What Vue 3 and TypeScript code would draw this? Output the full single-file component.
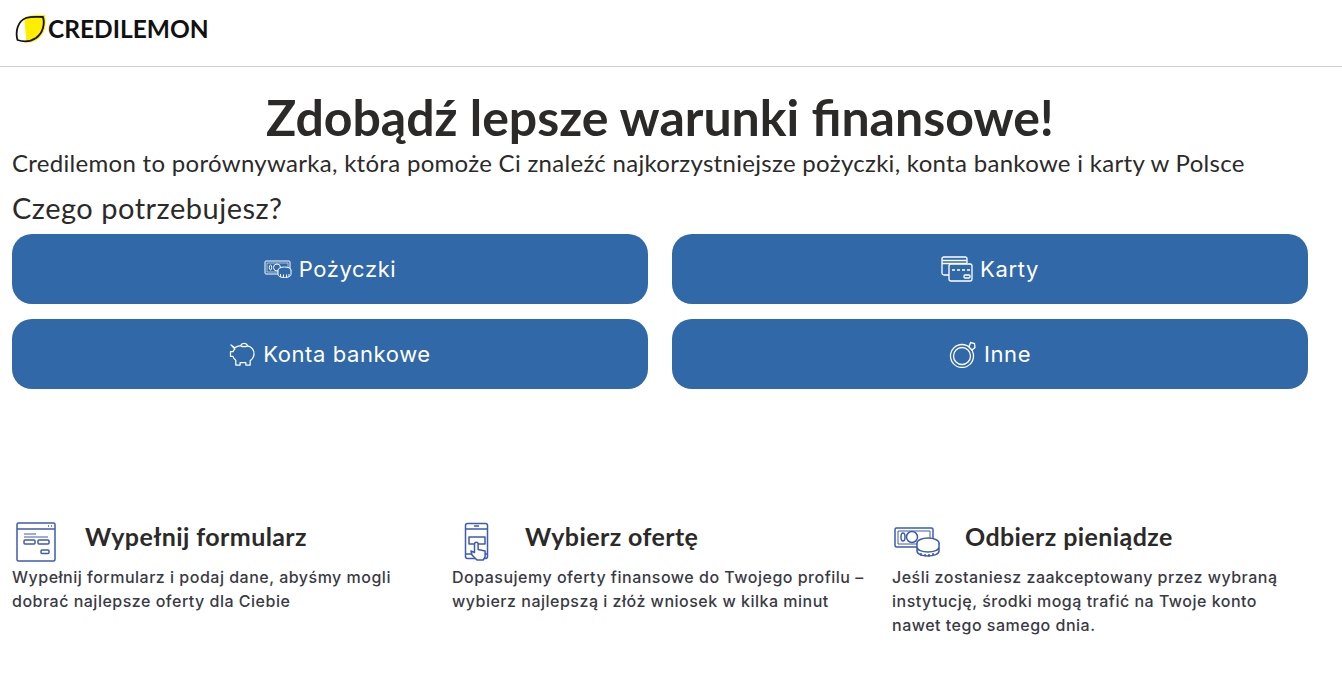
<template>
  <div class="page">
    <header class="topbar">
      <a class="logo">
        <svg width="33" height="28" viewBox="0 0 33 28">
          <path d="M10 2C15 0 25-.5 30 0c2 9 0 19-7 24-4 3-9 4-13 3.500 3-7-2-18 0-25.500z" fill="#ffee00" />
          <path d="M2.500 25C0 16 3 6 11 3c6-2 13-1 17-1 2 7 0 16-7 21-6 4-13 4-18.500 2z" fill="none" stroke="#111" stroke-width="1.800" stroke-linejoin="round" />
        </svg>
        <span>CREDILEMON</span>
      </a>
    </header>

    <main class="content">
      <h1>Zdobądź lepsze warunki finansowe!</h1>
      <p class="lead">Credilemon to porównywarka, która pomoże Ci znaleźć najkorzystniejsze pożyczki, konta bankowe i karty w Polsce</p>
      <h2>Czego potrzebujesz?</h2>

      <div class="choices">
        <button class="choice">
          <svg width="28" height="18" viewBox="0 0 28 18" fill="none" stroke="#fff" stroke-width="1">
            <rect x="1" y="1" width="25" height="13" rx="1" />
            <rect x="3" y="3" width="21" height="9" stroke-width="0.6" />
            <circle cx="13" cy="7.500" r="3.500" />
            <ellipse cx="6.500" cy="7.500" rx="1.200" ry="2.500" />
            <ellipse cx="20.500" cy="10" rx="6.500" ry="3" fill="#3068a8" />
            <path d="M14 10v4.500c0 1.800 3 3 6.500 3s6.500-1.200 6.500-3V10M16.500 14v3M19.500 14.500v3M22.500 14.500v3M25 14v2.500" fill="#3068a8" />
          </svg>
          Pożyczki
        </button>
        <button class="choice">
          <svg width="32" height="26" viewBox="0 0 32 26" fill="none" stroke="#fff" stroke-width="1.300">
            <path d="M8 19H3a2 2 0 0 1-2-2V3a2 2 0 0 1 2-2h21a2 2 0 0 1 2 2v4" />
            <path d="M1 4.500h25M1 7.500h25" />
            <rect x="8" y="8" width="23" height="17" rx="2" fill="#3068a8" />
            <path d="M11 14h3M16 14h3M21 14h3M26 14h3" />
            <rect x="23" y="19" width="6" height="3" rx="1" />
          </svg>
          Karty
        </button>
        <button class="choice">
          <svg width="27" height="24" viewBox="0 0 28 25" fill="none" stroke="#fff" stroke-width="1.300" stroke-linejoin="round">
            <path d="M2 3l4 3c2-1.500 4-2 6-2.200C13 1 18 .5 19.500 4c4 1 7 4.500 6.500 9-.3 3-2 5-4 6.500V24h-4.500v-2.500h-6V24H7v-5c-1.500-1-2.500-2.500-3-4H1.500V10H4c.5-1 1-2 2-2.500L2 3z" />
            <path d="M12 4c2 1 5 1 7.500 0" />
          </svg>
          Konta bankowe
        </button>
        <button class="choice">
          <svg width="28" height="28" viewBox="0 0 28 28" fill="none" stroke="#fff" stroke-width="1.300">
            <circle cx="13" cy="16" r="11.500" />
            <circle cx="13" cy="16" r="8.500" />
            <path d="M20 7l1.500-4.500 4 1 .5 4-3 2.500z" fill="#3068a8" />
          </svg>
          Inne
        </button>
      </div>

      <section class="steps">
        <div class="step">
          <div class="step-head">
            <svg width="48" height="40" viewBox="0 0 48 40" fill="none" stroke="#3f5bb0" stroke-width="1.500">
              <rect x="5" y="1" width="38" height="38" rx="1.500" />
              <path d="M5 7h38M36 4h1M39 4h1" />
              <path d="M12 12h12M12 15h24" stroke-width="1" />
              <rect x="12" y="18" width="11" height="4" rx="1" />
              <rect x="26" y="18" width="11" height="4" rx="1" />
              <rect x="29" y="28" width="8" height="3.500" rx="1" />
            </svg>
            <h3>Wypełnij formularz</h3>
          </div>
          <p>Wypełnij formularz i podaj dane, abyśmy mogli dobrać najlepsze oferty dla Ciebie</p>
        </div>
        <div class="step">
          <div class="step-head">
            <svg width="48" height="40" viewBox="0 0 48 40" fill="none" stroke="#3f5bb0" stroke-width="1.500" stroke-linejoin="round">
              <rect x="13.500" y="1.500" width="22" height="35" rx="2" />
              <path d="M13.500 7h22M13.500 32h8M30 32h5.500M22 4h5" />
              <rect x="17" y="15" width="16" height="7" />
              <path d="M25 38l-5-5-1-4 3.500 1.500V22a1.800 1.800 0 0 1 3.600 0v5.500l7 1.500v6l-2 3z" fill="#fff" />
            </svg>
            <h3>Wybierz ofertę</h3>
          </div>
          <p>Dopasujemy oferty finansowe do Twojego profilu – wybierz najlepszą i złóż wniosek w kilka minut</p>
        </div>
        <div class="step">
          <div class="step-head">
            <svg width="48" height="40" viewBox="0 0 48 40" fill="none" stroke="#3f5bb0" stroke-width="1.500">
              <rect x="3" y="6" width="38" height="19" rx="1.500" />
              <path d="M6 9h32v13H6z" stroke-width="1" />
              <circle cx="20" cy="15" r="5.500" />
              <ellipse cx="11" cy="15" rx="2" ry="4" />
              <ellipse cx="36" cy="21" rx="11" ry="5" fill="#fff" />
              <path d="M25 21v8c0 3 5 5 11 5s11-2 11-5v-8M25 25c0 3 5 5 11 5s11-2 11-5M29 31v3M33 32v3M37 32v3M41 31v3" fill="#fff" />
            </svg>
            <h3>Odbierz pieniądze</h3>
          </div>
          <p>Jeśli zostaniesz zaakceptowany przez wybraną instytucję, środki mogą trafić na Twoje konto nawet tego samego dnia.</p>
        </div>
      </section>
    </main>
  </div>
</template>

<script setup lang="ts">
</script>

<style>
html,
body {
  background: #fff;
}
</style>

<style scoped>
.page {
  width: 1342px;
  height: 684px;
  overflow: hidden;
  color: #2b2a29;
  font-family: "Lato", "Liberation Sans", sans-serif;
}

.topbar {
  height: 67px;
  box-sizing: border-box;
  border-bottom: 1px solid #cfcfcf;
  display: flex;
  align-items: flex-start;
  padding: 15px 0 0 15px;
}

.logo {
  display: flex;
  align-items: center;
  font-size: 24.500px;
  font-weight: 700;
  color: #111;
}

.logo span {
  margin-top: -1px;
}

.content {
  width: 1296px;
  padding: 0 12px;
}

h1 {
  margin: 23px 0 0;
  font-size: 50px;
  line-height: 54px;
  font-weight: 700;
  text-align: center;
}

.lead {
  margin: 4px 0 0;
  font-size: 24px;
  line-height: 30px;
  letter-spacing: 0.3px;
}

h2 {
  margin: 13px 0 0;
  font-size: 29px;
  line-height: 34px;
  font-weight: 400;
  letter-spacing: 0.5px;
}

.choices {
  display: grid;
  grid-template-columns: 636px 636px;
  column-gap: 24px;
  row-gap: 15px;
  margin-top: 9px;
}

.choice {
  height: 70px;
  border: none;
  border-radius: 20px;
  background: #3068a8;
  color: #fff;
  font-family: "Inter", "Liberation Sans", sans-serif;
  font-size: 22px;
  letter-spacing: 0.6px;
  display: flex;
  align-items: center;
  justify-content: center;
  gap: 7px;
  padding: 0;
}

.steps {
  display: grid;
  grid-template-columns: repeat(3, 440px);
  margin-top: 133px;
}

.step-head {
  display: flex;
  align-items: center;
  height: 40px;
}

.step-head h3 {
  margin: -12px 0 0 25px;
  font-size: 25px;
  font-weight: 700;
  letter-spacing: 0.4px;
}

.step p {
  margin: 3px 0 0;
  width: 412px;
  font-family: "Inter", "Liberation Sans", sans-serif;
  font-size: 16px;
  line-height: 24px;
  font-weight: 500;
  letter-spacing: 0.5px;
  color: #3a3a44;
}
</style>
